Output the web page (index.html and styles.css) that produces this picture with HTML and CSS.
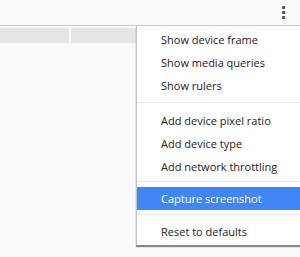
FILE: index.html
```html
<!DOCTYPE html>
<html lang="en">

<head>
    <meta charset="UTF-8" />
    <title>Device toolbar menu</title>
    <link rel="stylesheet" href="styles.css">
</head>

<body>
    <div class="toolbar">
        <button class="kebab" aria-label="More options">
            <svg width="3" height="13" viewBox="0 0 3 13">
                <rect x="0" y="0" width="3" height="3" rx="0.6" />
                <rect x="0" y="5" width="3" height="3" rx="0.6" />
                <rect x="0" y="10" width="3" height="3" rx="0.6" />
            </svg>
        </button>
    </div>
    <div class="viewport">
        <div class="media-bar">
            <div class="media-cell wide"></div>
            <div class="media-cell"></div>
        </div>
    </div>

    <div class="menu">
        <div class="item">Show device frame</div>
        <div class="item">Show media queries</div>
        <div class="item">Show rulers</div>
        <div class="separator first"></div>
        <div class="item">Add device pixel ratio</div>
        <div class="item">Add device type</div>
        <div class="item">Add network throttling</div>
        <div class="separator"></div>
        <div class="item selected">Capture screenshot</div>
        <div class="separator last"></div>
        <div class="item">Reset to defaults</div>
    </div>
</body>

</html>
```

FILE: styles.css
```css
body {
    margin: 0;
    padding: 0;
    background-color: #f9f9f9;
    font-family: "Open Sans", "Noto Sans", sans-serif;
    height: 257px;
    overflow: hidden;
    position: relative;
}

.toolbar {
    height: 25px;
    border-bottom: 1px solid #cbcbcb;
    display: flex;
    justify-content: flex-end;
    align-items: flex-start;
}

.kebab {
    border: none;
    background: none;
    padding: 0;
    margin: 6px 15px 0 0;
    display: flex;
    fill: #5a5a5a;
}

.viewport {
    padding-top: 2px;
}

.media-bar {
    width: 136px;
    height: 15px;
    display: flex;
    gap: 2px;
}

.media-cell {
    flex: 1;
    background-color: #e5e5e5;
}

.media-cell.wide {
    flex: 0 0 69px;
}

.menu {
    position: absolute;
    top: 26px;
    left: 136px;
    right: 0;
    background-color: #fff;
    border-left: 1px solid #c4c4c4;
    padding: 2px 0 2px;
    box-shadow: 0 2px 1px rgba(0, 0, 0, 0.45);
}

.item {
    height: 23px;
    line-height: 23px;
    padding-left: 24px;
    font-size: 11px;
    color: #222;
    white-space: nowrap;
}

.item.selected {
    background-color: #4285f4;
    color: #fff;
}

.separator {
    height: 1px;
    margin: 3px 0 5px;
    background-color: #e9e9e9;
}

.separator.first {
    margin: 5px 0 6px;
}

.separator.last {
    margin: 4px 0 5px;
}
```
